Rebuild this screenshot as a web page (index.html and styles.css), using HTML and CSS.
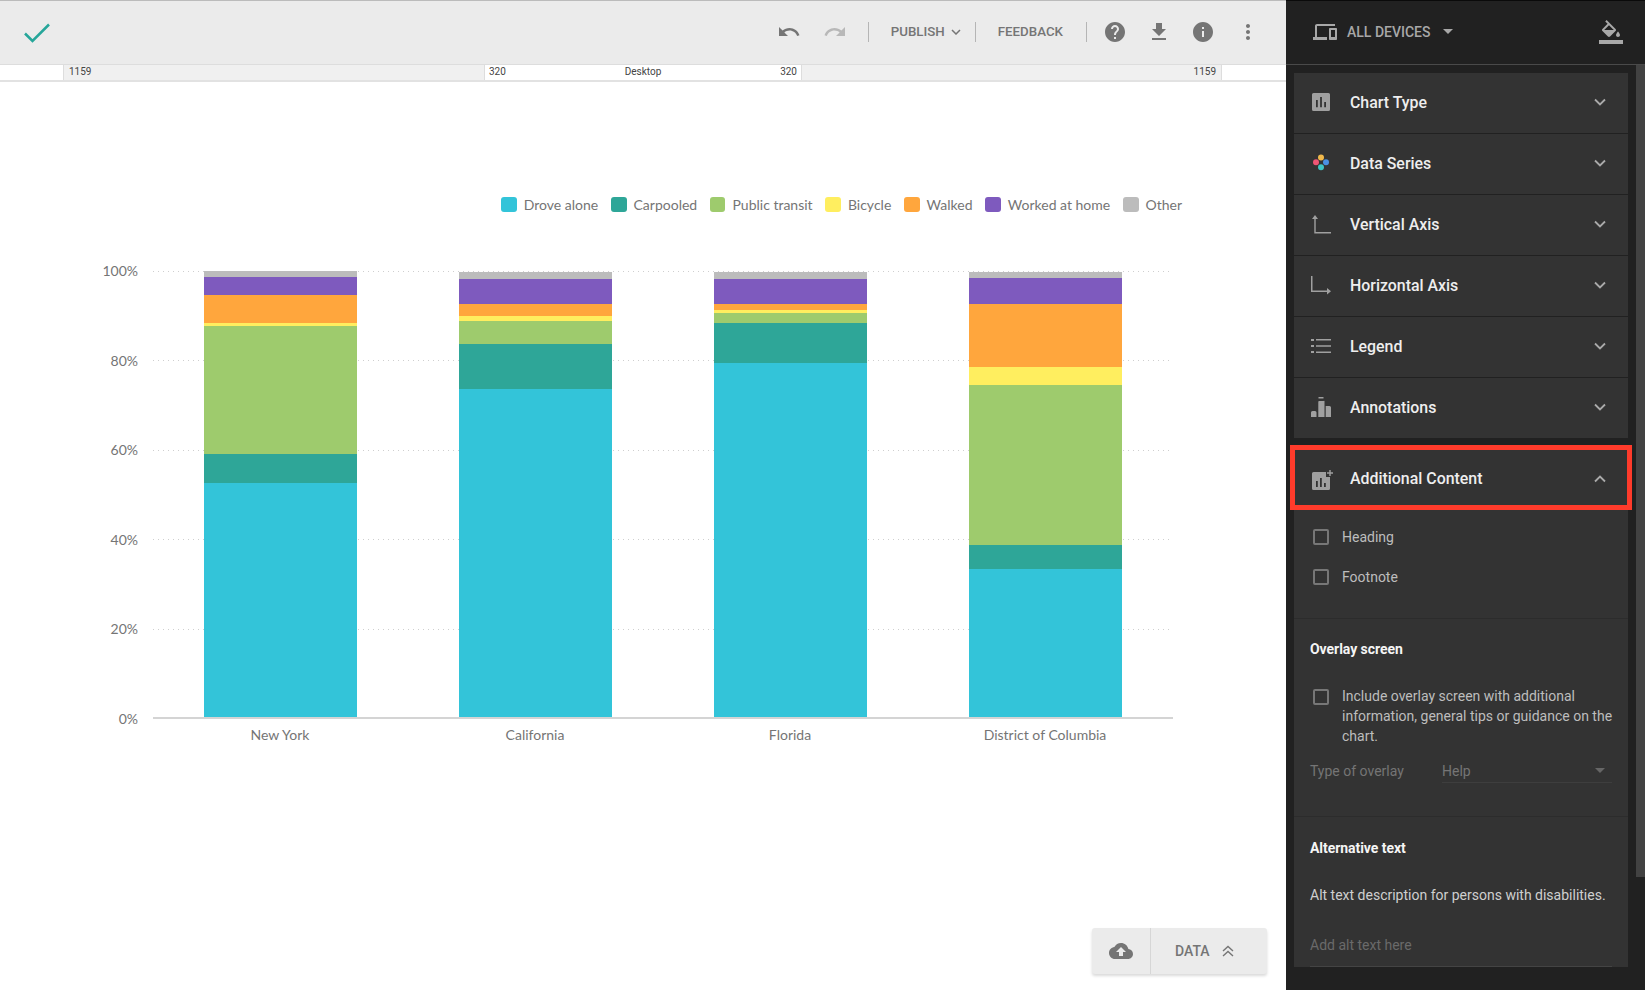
FILE: index.html
```html
<!DOCTYPE html>
<html lang="en">
<head>
<meta charset="utf-8">
<title>Chart editor</title>
<link rel="stylesheet" href="styles.css">
</head>
<body>
<div class="app">
  <main class="main">
    <header class="toolbar">
      <svg class="check" viewBox="0 0 26 20"><path d="M1 10.5l7.5 7.5L25 1.500"/></svg>
      <div class="tools">
        <svg class="ico" viewBox="0 0 24 24"><path d="M12.500 8c-2.650 0-5.050.99-6.900 2.600L2 7v9h9l-3.620-3.620c1.390-1.160 3.160-1.880 5.120-1.880 3.540 0 6.550 2.310 7.600 5.500l2.370-.78C21.080 11.030 17.150 8 12.500 8z"/></svg>
        <svg class="ico ico-off gap-22" viewBox="0 0 24 24"><path d="M18.400 10.600C16.550 8.990 14.150 8 11.500 8c-4.650 0-8.580 3.030-9.960 7.220L3.900 16c1.050-3.190 4.050-5.500 7.600-5.500 1.950 0 3.730.72 5.120 1.880L13 16h9V7l-3.600 3.600z"/></svg>
        <span class="vr gap-21"></span>
        <span class="tb-text gap-22">PUBLISH</span>
        <svg class="chev-sm" viewBox="0 0 10 6"><path d="M1 1l4 4 4-4"/></svg>
        <span class="vr gap-14"></span>
        <span class="tb-text gap-22">FEEDBACK</span>
        <span class="vr gap-23"></span>
        <svg class="ico gap-16" viewBox="0 0 24 24"><path d="M12 2C6.480 2 2 6.480 2 12s4.480 10 10 10 10-4.480 10-10S17.520 2 12 2zm1 17h-2v-2h2v2zm2.070-7.750l-.9.92C13.450 12.900 13 13.500 13 15h-2v-.5c0-1.100.45-2.100 1.170-2.830l1.240-1.260c.37-.36.59-.86.59-1.410 0-1.100-.9-2-2-2s-2 .9-2 2H8c0-2.210 1.790-4 4-4s4 1.790 4 4c0 .88-.36 1.680-.93 2.250z"/></svg>
        <svg class="ico gap-20" viewBox="0 0 24 24"><path d="M19 9h-4V3H9v6H5l7 7 7-7zM5 18v2h14v-2H5z"/></svg>
        <svg class="ico gap-20" viewBox="0 0 24 24"><path d="M12 2C6.480 2 2 6.480 2 12s4.480 10 10 10 10-4.480 10-10S17.520 2 12 2zm1 15h-2v-6h2v6zm0-8h-2V7h2v2z"/></svg>
        <svg class="ico gap-21" viewBox="0 0 24 24"><path d="M12 8c1.100 0 2-.9 2-2s-.9-2-2-2-2 .9-2 2 .9 2 2 2zm0 2c-1.100 0-2 .9-2 2s.9 2 2 2 2-.9 2-2-.9-2-2-2zm0 6c-1.100 0-2 .9-2 2s.9 2 2 2 2-.9 2-2-.9-2-2-2z"/></svg>
      </div>
    </header>
    <div class="ruler">
      <div class="r-edge"></div>
      <div class="r-side"><span>1159</span></div>
      <div class="r-mid"><span>320</span><span>Desktop</span><span>320</span></div>
      <div class="r-side r-end"><span>1159</span></div>
      <div class="r-edge"></div>
    </div>
    <section class="canvas">
      <ul class="legend">
        <li><i class="sw c-cyan"></i>Drove alone</li>
        <li><i class="sw c-teal"></i>Carpooled</li>
        <li><i class="sw c-green"></i>Public transit</li>
        <li><i class="sw c-yellow"></i>Bicycle</li>
        <li><i class="sw c-orange"></i>Walked</li>
        <li><i class="sw c-purple"></i>Worked at home</li>
        <li><i class="sw c-gray"></i>Other</li>
      </ul>
      <svg class="plot" viewBox="0 215 1286 560" width="1286" height="560">
        <g class="grid">
          <line x1="153" x2="1171" y1="271.500" y2="271.500"/>
          <line x1="153" x2="1171" y1="360.500" y2="360.500"/>
          <line x1="153" x2="1171" y1="450.500" y2="450.500"/>
          <line x1="153" x2="1171" y1="539.500" y2="539.500"/>
          <line x1="153" x2="1171" y1="629.500" y2="629.500"/>
        </g>
        <line class="axis" x1="153" x2="1173" y1="718" y2="718"/>
        <g class="ylab">
          <text x="138" y="276">100%</text>
          <text x="138" y="366">80%</text>
          <text x="138" y="455">60%</text>
          <text x="138" y="545">40%</text>
          <text x="138" y="634">20%</text>
          <text x="138" y="724">0%</text>
        </g>
        <g class="xlab">
          <text x="280" y="739.500">New York</text>
          <text x="535" y="739.500">California</text>
          <text x="790" y="739.500">Florida</text>
          <text x="1045" y="739.500">District of Columbia</text>
        </g>
        <g>
          <rect class="f-gray" x="204" y="271" width="153" height="6"/>
          <rect class="f-purple" x="204" y="277" width="153" height="18"/>
          <rect class="f-orange" x="204" y="295" width="153" height="28"/>
          <rect class="f-yellow" x="204" y="323" width="153" height="3"/>
          <rect class="f-green" x="204" y="326" width="153" height="128"/>
          <rect class="f-teal" x="204" y="454" width="153" height="29"/>
          <rect class="f-cyan" x="204" y="483" width="153" height="234"/>
        </g>
        <g>
          <rect class="f-gray" x="459" y="272" width="153" height="7"/>
          <rect class="f-purple" x="459" y="279" width="153" height="25"/>
          <rect class="f-orange" x="459" y="304" width="153" height="12"/>
          <rect class="f-yellow" x="459" y="316" width="153" height="5"/>
          <rect class="f-green" x="459" y="321" width="153" height="23"/>
          <rect class="f-teal" x="459" y="344" width="153" height="45"/>
          <rect class="f-cyan" x="459" y="389" width="153" height="328"/>
        </g>
        <g>
          <rect class="f-gray" x="714" y="272" width="153" height="7"/>
          <rect class="f-purple" x="714" y="279" width="153" height="25"/>
          <rect class="f-orange" x="714" y="304" width="153" height="6"/>
          <rect class="f-yellow" x="714" y="310" width="153" height="3"/>
          <rect class="f-green" x="714" y="313" width="153" height="10"/>
          <rect class="f-teal" x="714" y="323" width="153" height="40"/>
          <rect class="f-cyan" x="714" y="363" width="153" height="354"/>
        </g>
        <g>
          <rect class="f-gray" x="969" y="272" width="153" height="6"/>
          <rect class="f-purple" x="969" y="278" width="153" height="26"/>
          <rect class="f-orange" x="969" y="304" width="153" height="63"/>
          <rect class="f-yellow" x="969" y="367" width="153" height="18"/>
          <rect class="f-green" x="969" y="385" width="153" height="160"/>
          <rect class="f-teal" x="969" y="545" width="153" height="24"/>
          <rect class="f-cyan" x="969" y="569" width="153" height="148"/>
        </g>
      </svg>
      <div class="databox">
        <div class="db-cloud">
          <svg class="ico-cloud" viewBox="0 0 24 24"><path d="M19.350 10.040C18.670 6.590 15.640 4 12 4 9.110 4 6.600 5.640 5.350 8.040 2.340 8.360 0 10.910 0 14c0 3.310 2.690 6 6 6h13c2.760 0 5-2.240 5-5 0-2.640-2.050-4.780-4.650-4.960zM14 13v4h-4v-4H7l5-5 5 5h-3z"/></svg>
        </div>
        <div class="db-data">
          <span>DATA</span>
          <svg class="chev-dbl" viewBox="0 0 12 12"><path d="M1 6l5-4.500L11 6M1 11l5-4.500L11 11"/></svg>
        </div>
      </div>
    </section>
  </main>

  <aside class="side">
    <header class="side-head">
      <svg class="ico-side" viewBox="0 0 24 24"><path d="M4 6h18V4H4c-1.100 0-2 .9-2 2v11H0v3h14v-3H4V6zm19 2h-6c-.55 0-1 .45-1 1v10c0 .55.45 1 1 1h6c.55 0 1-.45 1-1V9c0-.55-.45-1-1-1zm-1 9h-4v-7h4v7z"/></svg>
      <span class="all-dev">ALL DEVICES</span>
      <i class="caret"></i>
      <svg class="ico-side bucket" viewBox="0 0 24 24"><path d="M16.560 8.940L7.620 0 6.210 1.410l2.380 2.380-5.150 5.150c-.59.59-.59 1.540 0 2.120l5.500 5.500c.29.29.68.44 1.060.44s.77-.15 1.060-.44l5.500-5.500c.59-.58.59-1.530 0-2.120zM5.210 10L10 5.210 14.790 10H5.210zM19 11.500s-2 2.170-2 3.500c0 1.100.9 2 2 2s2-.9 2-2c0-1.330-2-3.500-2-3.500zM0 20h24v4H0z"/></svg>
    </header>
    <div class="side-body">
      <div class="side-col">
        <div class="card">
          <div class="acc">
            <svg class="acc-ico" viewBox="0 0 20 20"><path fill-rule="evenodd" d="M2.500 1h15A1.500 1.500 0 0 1 19 2.500v15a1.500 1.500 0 0 1-1.500 1.500h-15A1.500 1.500 0 0 1 1 17.500v-15A1.500 1.500 0 0 1 2.500 1zM5 8v7.300h1.800V8zM9.100 5v10.300h1.800V5zM13.200 10v5.300H15V10z"/></svg>
            <span class="acc-label">Chart Type</span>
            <svg class="chev" viewBox="0 0 12 8"><path d="M1 1.500l5 5 5-5"/></svg>
          </div>
          <div class="acc">
            <svg class="acc-ico" viewBox="0 0 20 20"><circle cx="10" cy="4.500" r="3" fill="#f0b94c"/><circle cx="5" cy="9.300" r="3" fill="#ef5675"/><circle cx="15" cy="9.300" r="3" fill="#4a90e2"/><circle cx="10" cy="14.200" r="3" fill="#3fc4c4"/></svg>
            <span class="acc-label">Data Series</span>
            <svg class="chev" viewBox="0 0 12 8"><path d="M1 1.500l5 5 5-5"/></svg>
          </div>
          <div class="acc">
            <svg class="acc-ico" viewBox="0 0 20 20"><path d="M4 1L1 5h2.300v14.500H20V18H4.700V5H7z"/></svg>
            <span class="acc-label">Vertical Axis</span>
            <svg class="chev" viewBox="0 0 12 8"><path d="M1 1.500l5 5 5-5"/></svg>
          </div>
          <div class="acc">
            <svg class="acc-ico" viewBox="0 0 20 20"><path d="M0 1h1.500v14.500H16V13l4 3.300-4 3.200v-2.500H0z"/></svg>
            <span class="acc-label">Horizontal Axis</span>
            <svg class="chev" viewBox="0 0 12 8"><path d="M1 1.500l5 5 5-5"/></svg>
          </div>
          <div class="acc">
            <svg class="acc-ico" viewBox="0 0 20 20"><path d="M0 3h3v2H0zM5 3h15v1.500H5zM0 9h3v2H0zM5 9.300h15v1.500H5zM0 15h3v2H0zM5 15.500h15V17H5z"/></svg>
            <span class="acc-label">Legend</span>
            <svg class="chev" viewBox="0 0 12 8"><path d="M1 1.500l5 5 5-5"/></svg>
          </div>
          <div class="acc">
            <svg class="acc-ico" viewBox="0 0 20 20"><path d="M7.500 0h5v1.500h-5zM1.500 14H4a1.500 1.500 0 0 1 1.500 1.500V20H0v-4.500A1.500 1.500 0 0 1 1.500 14zM8 4h4.500a1 1 0 0 1 1 0V20H7.300V5a1 1 0 0 1 .7-1zM14.700 9h3.800a1.500 1.500 0 0 1 1.500 1.500V20h-5.300z"/></svg>
            <span class="acc-label">Annotations</span>
            <svg class="chev" viewBox="0 0 12 8"><path d="M1 1.500l5 5 5-5"/></svg>
          </div>
        </div>
        <div class="card card-open">
          <div class="acc acc-open">
            <svg class="acc-ico acc-ico-add" viewBox="0 0 20 20"><path fill-rule="evenodd" d="M2.500 3H15v5h4v11.500a1.500 1.500 0 0 1-1.500 1.500h-15A1.500 1.500 0 0 1 1 19.500v-15A1.500 1.500 0 0 1 2.500 3zM5 12v6h1.800v-6zM9 9v9h1.800V9zM13 14v4h1.800v-4z"/><path d="M18.300 1h1.400v2.300H22v1.400h-2.300V7h-1.400V4.700H16V3.300h2.300z"/></svg>
            <span class="acc-label">Additional Content</span>
            <svg class="chev" viewBox="0 0 12 8"><path d="M1 6.500l5-5 5 5"/></svg>
          </div>
          <div class="block block-checks">
            <label class="row"><i class="cb"></i>Heading</label>
            <label class="row"><i class="cb"></i>Footnote</label>
          </div>
          <div class="block block-overlay">
            <h3 class="sub">Overlay screen</h3>
            <label class="row-multi"><i class="cb"></i><span>Include overlay screen with additional information, general tips or guidance on the chart.</span></label>
            <div class="type-row">
              <span class="type-label">Type of overlay</span>
              <div class="select"><span>Help</span><i class="caret caret-dim"></i></div>
            </div>
          </div>
          <div class="block block-alt">
            <h3 class="sub">Alternative text</h3>
            <p class="alt-desc">Alt text description for persons with disabilities.</p>
            <div class="alt-input">Add alt text here</div>
          </div>
        </div>
      </div>
      <div class="scrolltrack"><div class="scrollthumb"></div></div>
    </div>
  </aside>
</div>
</body>
</html>
```
FILE: styles.css
```css
* { box-sizing: border-box; }
html, body { margin: 0; height: 100%; overflow: hidden; background: #fff; }
body { font-family: Roboto, "Liberation Sans", sans-serif; }

.app { display: flex; width: 1645px; height: 990px; }
.main { width: 1286px; display: flex; flex-direction: column; background: #fff; }

/* toolbar */
.toolbar { height: 65px; flex: none; background: #ebebeb; border-top: 1.500px solid #bbb; border-bottom: 1px solid #ddd; display: flex; align-items: center; padding: 0 26px 0 24px; }
.check { width: 26px; height: 20px; fill: none; stroke: #26a69a; stroke-width: 2.500; }
.tools { margin-left: auto; margin-bottom: 2px; display: flex; align-items: center; }
.ico { width: 24px; height: 24px; fill: #757575; flex: none; }
.ico-off { fill: #b8b8b8; }
.vr { width: 1px; height: 20px; background: #b5b5b5; flex: none; }
.tb-text { font-size: 13.300px; font-weight: 500; color: #757575; line-height: 20px; }
.chev-sm { width: 10px; height: 6px; margin-left: 6px; fill: none; stroke: #757575; stroke-width: 1.500; }
.gap-14 { margin-left: 14px; }
.gap-16 { margin-left: 16px; }
.gap-20 { margin-left: 20px; }
.gap-21 { margin-left: 21px; }
.gap-22 { margin-left: 22px; }
.gap-23 { margin-left: 23px; }

/* ruler */
.ruler { height: 17px; flex: none; display: flex; font-size: 10px; line-height: 14px; color: #444; border-bottom: 2px solid #e2e2e2; }
.r-edge { width: 63px; background: #fff; }
.r-side { width: 421px; background: #f0f0f0; border-left: 1px solid #ddd; padding: 0 5px; }
.r-end { width: 420px; text-align: right; border-left: 0; border-right: 1px solid #ddd; }
.r-mid { width: 318px; background: #fff; border-left: 1px solid #ddd; border-right: 1px solid #ddd; display: flex; justify-content: space-between; padding: 0 4px; }

/* chart */
.canvas { flex: 1; position: relative; font-family: Lato, sans-serif; color: #757575; }
.legend { list-style: none; margin: 0; padding: 112px 104px 0 0; display: flex; justify-content: flex-end; gap: 12.800px; font-size: 14px; line-height: 21px; }
.legend li { display: flex; align-items: center; gap: 7px; white-space: nowrap; }
.sw { display: block; width: 15.500px; height: 14.500px; border-radius: 3px; }
.c-cyan { background: #33c4d9; }
.c-teal { background: #2ea698; }
.c-green { background: #9ecb6d; }
.c-yellow { background: #ffee5f; }
.c-orange { background: #ffa63d; }
.c-purple { background: #7e5abe; }
.c-gray { background: #bcbcbc; }
.plot { display: block; }
.f-cyan { fill: #33c4d9; }
.f-teal { fill: #2ea698; }
.f-green { fill: #9ecb6d; }
.f-yellow { fill: #ffee5f; }
.f-orange { fill: #ffa63d; }
.f-purple { fill: #7e5abe; }
.f-gray { fill: #bcbcbc; }
.grid line { stroke: #cfcfcf; stroke-width: 1; stroke-dasharray: 1 4; }
.axis { stroke: #d4d4d4; stroke-width: 2; }
.ylab text { font-size: 14px; fill: #757575; text-anchor: end; }
.xlab text { font-size: 14px; fill: #757575; text-anchor: middle; }

.databox { position: absolute; right: 19px; bottom: 16px; width: 175px; height: 46px; display: flex; background: #ebebeb; border-radius: 3px; box-shadow: 0 2px 3px rgba(0,0,0,.15); font-family: Roboto, sans-serif; }
.db-cloud { width: 59px; display: flex; align-items: center; justify-content: center; border-right: 1px solid #d6d6d6; }
.ico-cloud { width: 24px; height: 24px; fill: #757575; }
.db-data { flex: 1; display: flex; align-items: center; padding-left: 24px; font-size: 14px; font-weight: 500; color: #757575; }
.chev-dbl { width: 12px; height: 12px; margin-left: 12px; fill: none; stroke: #757575; stroke-width: 1.400; }

/* sidebar */
.side { width: 359px; height: 990px; background: #212121; display: flex; flex-direction: column; border-top: 1px solid #0a0a0a; overflow: hidden; }
.side-head { height: 64px; flex: none; display: flex; align-items: center; padding: 0 22px 2px 27px; border-bottom: 1px solid #4a4a4a; }
.ico-side { width: 24px; height: 24px; fill: #a8a8a8; flex: none; }
.all-dev { margin-left: 10px; font-size: 14px; font-weight: 500; color: #a8a8a8; }
.caret { display: block; width: 0; height: 0; margin-left: 13px; border-left: 5px solid transparent; border-right: 5px solid transparent; border-top: 5px solid #a8a8a8; }
.bucket { margin-left: auto; }
.side-body { flex: 1; display: flex; min-height: 0; }
.side-col { width: 342px; padding: 8px 0 0 8px; flex: none; }
.card { background: #333; }
.card-open { margin-top: 11px; }
.acc { height: 61px; display: flex; align-items: center; padding: 0 22px 2px 17px; border-bottom: 1px solid #212121; position: relative; }
.card > .acc:last-child { border-bottom: 0; height: 60px; }
.acc-ico { width: 20px; height: 20px; fill: #a0a0a0; flex: none; }
.acc-ico-add { overflow: visible; }
.acc-label { margin-left: 19px; font-size: 15.900px; font-weight: 500; color: #eee; white-space: nowrap; }
.chev { width: 12px; height: 8px; margin-left: auto; fill: none; stroke: #aaa; stroke-width: 1.800; }
.acc-open { border-bottom: 0; }
.acc-open::after { content: ""; position: absolute; left: -4px; right: -4px; top: -4px; bottom: 0; border: 5px solid #ff3b2b; pointer-events: none; }
.block { color: #bdbdbd; font-size: 14px; }
.block-checks { padding: 7px 0 21px; border-bottom: 1px solid #2c2c2c; }
.row { display: flex; align-items: center; height: 40px; padding-left: 19px; gap: 13px; }
.cb { display: block; width: 16px; height: 16px; border: 2px solid #777; border-radius: 2px; flex: none; }
.block-overlay { padding: 20px 16px 33px; border-bottom: 1px solid #2c2c2c; }
.sub { margin: 0; font-size: 14px; font-weight: 700; line-height: 20px; color: #f5f5f5; letter-spacing: -.05px; }
.row-multi { display: flex; gap: 13px; margin: 27px -6px 0 0; padding-left: 3px; line-height: 20px; }
.row-multi .cb { margin-top: 3px; }
.type-row { display: flex; align-items: flex-end; margin-top: 15px; color: #757575; }
.type-label { width: 132px; line-height: 20px; padding-bottom: 2px; }
.select { flex: 1; display: flex; align-items: center; justify-content: space-between; height: 22px; border-bottom: 1px solid #3e3e3e; padding: 0 7px 2px 0; }
.caret-dim { border-top-color: #666; }
.block-alt { padding: 21px 16px 0; }
.alt-desc { margin: 27px 0 0; line-height: 20px; color: #cfcfcf; }
.alt-input { margin-top: 30px; height: 32px; line-height: 20px; color: #6a6a6a; border-bottom: 1px solid #444; }
.scrolltrack { margin-left: 8px; width: 9px; flex: 1; }
.scrollthumb { height: 812px; background: #424242; }
```
